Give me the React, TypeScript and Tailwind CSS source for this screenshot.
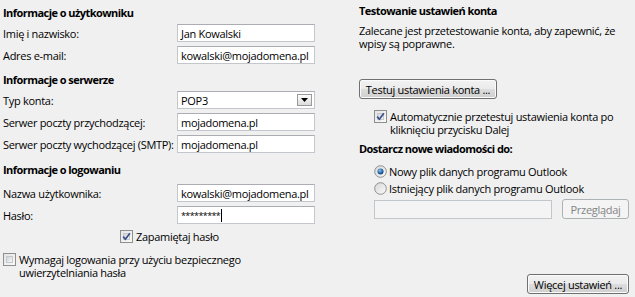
import type { ReactNode } from "react"

function CheckBox({ checked = false, className = "" }: { checked?: boolean; className?: string }) {
  return (
    <span
      className={`relative inline-flex h-[13px] w-[13px] shrink-0 border border-[#8e8f8f] bg-[linear-gradient(135deg,#e4e4e4,#fafafa)] ${className}`}
    >
      <span className="absolute inset-[2px] border border-[#c6c9cc] bg-[linear-gradient(135deg,#cfd3d8,#f7f7f7)]" />
      {checked ? (
        <svg className="absolute left-[0px] top-[0px]" width="11" height="11" viewBox="0 0 11 11">
          <path d="M2.2 5.6 L4.4 8.2 L8.9 2.2" fill="none" stroke="#3a4f86" strokeWidth="1.7" />
        </svg>
      ) : null}
    </span>
  )
}

function Radio({ checked = false }: { checked?: boolean }) {
  return (
    <svg className="shrink-0" width="13" height="13" viewBox="0 0 13 13">
      <defs>
        <linearGradient id={checked ? "rg1" : "rg0"} x1="0" y1="0" x2="1" y2="1">
          <stop offset="0" stopColor="#d6d6d6" />
          <stop offset="1" stopColor="#fbfbfb" />
        </linearGradient>
        <radialGradient id="dot" cx="0.4" cy="0.35" r="0.7">
          <stop offset="0" stopColor="#8fc4ee" />
          <stop offset="0.55" stopColor="#2a6fb0" />
          <stop offset="1" stopColor="#10386a" />
        </radialGradient>
      </defs>
      <circle cx="6.5" cy="6.5" r="5.8" fill={`url(#${checked ? "rg1" : "rg0"})`} stroke="#8e8f8f" strokeWidth="1" />
      {checked ? <circle cx="6.5" cy="6.5" r="3" fill="url(#dot)" /> : null}
    </svg>
  )
}

function TextBox({ value, className = "", children }: { value?: string; className?: string; children?: ReactNode }) {
  return (
    <div
      className={`flex h-[18px] w-[138px] items-center border border-[#c3c7cc] border-t-[#abadb3] bg-white px-[3px] ${className}`}
    >
      {value}
      {children}
    </div>
  )
}

function Button({ children, className = "", disabled = false }: { children: ReactNode; className?: string; disabled?: boolean }) {
  return (
    <button
      className={
        disabled
          ? `flex items-center justify-center rounded-[3px] border border-[#adb2b5] bg-[#f4f4f4] text-[#838383] ${className}`
          : `flex items-center justify-center rounded-[3px] border border-[#707070] bg-[linear-gradient(to_bottom,#f2f2f2_0%,#ebebeb_50%,#dddddd_51%,#cfcfcf_100%)] shadow-[inset_0_0_0_1px_#fbfbfb] ${className}`
      }
    >
      {children}
    </button>
  )
}

function Row({ label, className = "", children }: { label: string; className?: string; children: ReactNode }) {
  return (
    <div className={`flex h-[18px] items-center ${className}`}>
      <span className="w-[174px] shrink-0">{label}</span>
      {children}
    </div>
  )
}

const heading = "h-[15px] font-bold tracking-[-0.55px]"

export default function App() {
  return (
    <div className="flex h-[297px] w-[635px] overflow-hidden bg-[#f0f0f0] font-['Open_Sans',sans-serif] text-[11px] leading-[15px] tracking-[-0.3px] text-black">
      {/* left: user / server / login */}
      <div className="flex w-[359px] flex-col pl-[3px] pt-[5px]">
        <div className={heading}>Informacje o użytkowniku</div>
        <Row label="Imię i nazwisko:" className="mt-[4px]">
          <TextBox value="Jan Kowalski" />
        </Row>
        <Row label="Adres e-mail:" className="mt-[4px]">
          <TextBox value="kowalski@mojadomena.pl" />
        </Row>

        <div className={`mt-[8px] ${heading}`}>Informacje o serwerze</div>
        <Row label="Typ konta:" className="mt-[4px]">
          <TextBox className="justify-between pr-[2px]">
            <span>POP3</span>
            <span className="flex h-[12px] w-[15px] items-center justify-center border border-[#9a9a9a] bg-[linear-gradient(to_bottom,#fdfdfd,#dcdcdc)]">
              <svg width="7" height="4" viewBox="0 0 7 4">
                <path d="M0 0 L7 0 L3.5 4 Z" fill="#000" />
              </svg>
            </span>
          </TextBox>
        </Row>
        <Row label="Serwer poczty przychodzącej:" className="mt-[4px]">
          <TextBox value="mojadomena.pl" />
        </Row>
        <Row label="Serwer poczty wychodzącej (SMTP):" className="mt-[4px]">
          <TextBox value="mojadomena.pl" />
        </Row>

        <div className={`mt-[9px] ${heading}`}>Informacje o logowaniu</div>
        <Row label="Nazwa użytkownika:" className="mt-[7px]">
          <TextBox value="kowalski@mojadomena.pl" />
        </Row>
        <Row label="Hasło:" className="mt-[4px]">
          <TextBox>
            <span className="text-[9px] tracking-[-0.6px]">*********</span>
            <span className="ml-[1px] h-[13px] w-[1px] bg-black" />
          </TextBox>
        </Row>

        <div className="mt-[5px] flex h-[15px] items-center gap-[3px] pl-[117px]">
          <CheckBox checked />
          <span>Zapamiętaj hasło</span>
        </div>

        <div className="mt-[9px] flex items-start gap-[3px] leading-[13px]">
          <CheckBox />
          <span>
            Wymagaj logowania przy użyciu bezpiecznego
            <br />
            uwierzytelniania hasła
          </span>
        </div>
      </div>

      {/* right: test settings / delivery */}
      <div className="flex flex-1 flex-col pr-[6px] pt-[3px]">
        <div className={heading}>Testowanie ustawień konta</div>
        <p className="mt-[6px] leading-[13px]">
          Zalecane jest przetestowanie konta, aby zapewnić, że
          <br />
          wpisy są poprawne.
        </p>
        <Button className="mt-[29px] h-[20px] w-[138px]">Testuj ustawienia konta ...</Button>

        <div className="mt-[11px] flex items-start gap-[3px] pl-[15px] leading-[13px]">
          <CheckBox checked />
          <span>
            Automatycznie przetestuj ustawienia konta po
            <br />
            kliknięciu przycisku Dalej
          </span>
        </div>

        <div className={`mt-[5px] ${heading}`}>Dostarcz nowe wiadomości do:</div>
        <div className="mt-[8px] flex h-[15px] items-center gap-[2px] pl-[15px]">
          <Radio checked />
          <span>Nowy plik danych programu Outlook</span>
        </div>
        <div className="mt-[2px] flex h-[15px] items-center gap-[2px] pl-[15px]">
          <Radio />
          <span>Istniejący plik danych programu Outlook</span>
        </div>
        <div className="mt-[3px] flex items-center gap-[10px] pl-[15px]">
          <div className="h-[19px] w-[178px] border border-[#c2c7cc] bg-[#f4f4f4]" />
          <Button disabled className="h-[20px] w-[67px]">
            Przeglądaj
          </Button>
        </div>

        <div className="mb-[3px] mt-auto flex justify-end">
          <Button className="h-[20px] w-[102px]">Więcej ustawień ...</Button>
        </div>
      </div>
    </div>
  )
}
